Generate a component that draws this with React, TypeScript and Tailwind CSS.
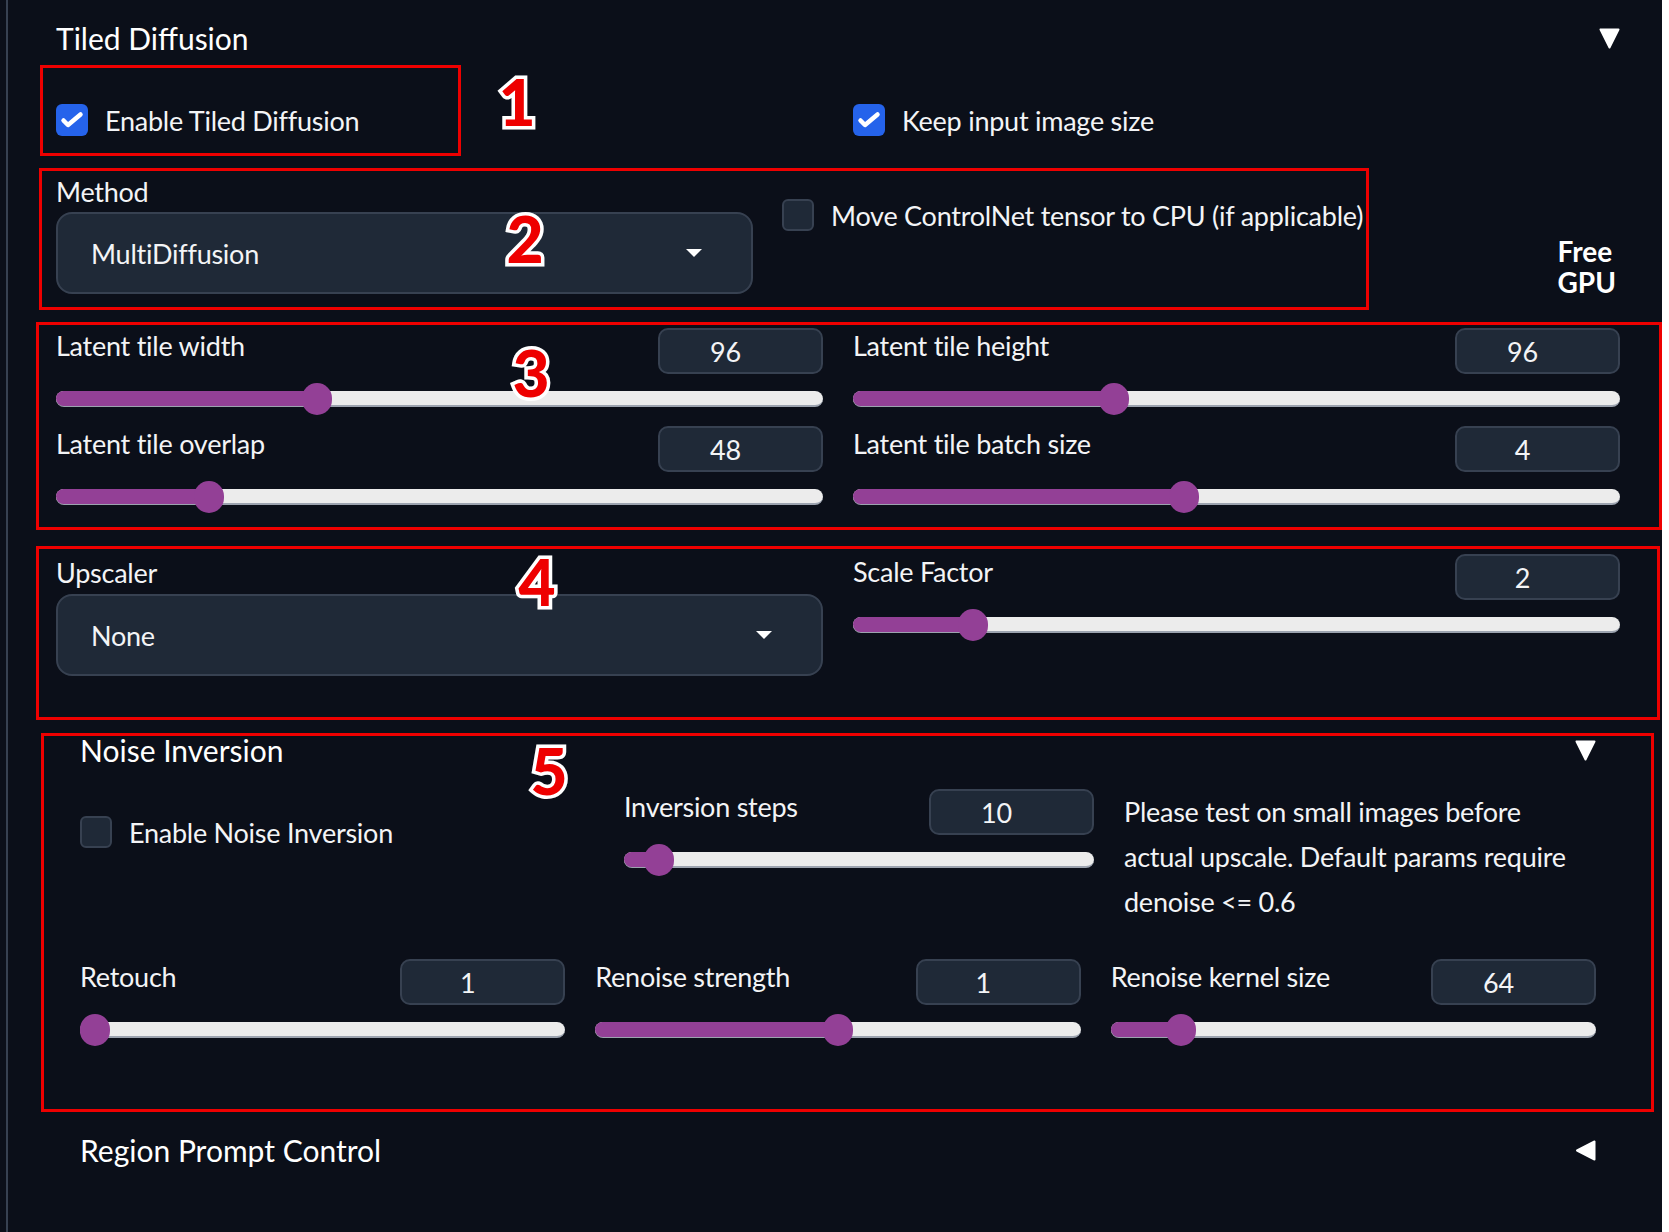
import React from "react";

type SliderProps = { label: string; value: string; frac: number };

function Checkbox({ on }: { on?: boolean }) {
  if (on) {
    return (
      <span className="flex h-[32px] w-[32px] shrink-0 items-center justify-center rounded-[6px] bg-[#2563eb]">
        <svg width="32" height="32" viewBox="0 0 32 32">
          <polyline
            points="7.5,16.5 12,21 24.5,10.5"
            fill="none"
            stroke="white"
            strokeWidth="4.5"
            strokeLinecap="round"
            strokeLinejoin="round"
          />
        </svg>
      </span>
    );
  }
  return <span className="h-[32px] w-[32px] shrink-0 rounded-[6px] border-2 border-[#374151] bg-[#1f2937]" />;
}

function CheckRow({ label, on }: { label: string; on?: boolean }) {
  return (
    <label className="flex items-center gap-[17px] text-[27px] leading-none">
      <Checkbox on={on} />
      <span>{label}</span>
    </label>
  );
}

function TriDown() {
  return (
    <svg width="21" height="21" viewBox="0 0 21 21" className="shrink-0">
      <polygon points="1.5,1.5 19.5,1.5 10.5,19.5" fill="white" stroke="white" strokeWidth="2" strokeLinejoin="round" />
    </svg>
  );
}

function TriLeft() {
  return (
    <svg width="21" height="21" viewBox="0 0 21 21" className="shrink-0">
      <polygon points="19.5,1.5 19.5,19.5 2,10.5" fill="white" stroke="white" strokeWidth="2" strokeLinejoin="round" />
    </svg>
  );
}

function Dropdown({ value, className }: { value: string; className?: string }) {
  return (
    <div
      className={
        "flex h-[82px] items-center justify-between rounded-[16px] border-2 border-[#374151] bg-[#1f2937] pl-[33px] pr-[49px] text-[27px] leading-none " +
        (className ?? "")
      }
    >
      <span>{value}</span>
      <svg width="16" height="8" viewBox="0 0 16 8">
        <polygon points="0,0 16,0 8,8" fill="white" />
      </svg>
    </div>
  );
}

function NumBox({ value }: { value: string }) {
  return (
    <div className="flex h-[46px] w-[165px] shrink-0 items-center justify-center rounded-[10px] border-2 border-[#374151] bg-[#1f2937] pr-[30px] text-[27px] leading-none">
      {value}
    </div>
  );
}

function Track({ frac, className }: { frac: number; className?: string }) {
  return (
    <div className={"relative h-[32px] " + (className ?? "")}>
      <div className="absolute inset-x-0 top-[8px] h-[16px] rounded-full border-b-2 border-[#9ca3af] bg-[#ececec]" />
      <div
        className="absolute left-0 top-[8px] h-[15px] rounded-l-full bg-[#934096]"
        style={{ width: `calc(15px + ${frac} * (100% - 30px))` }}
      />
      <div
        className="absolute top-0 h-[32px] w-[30px] rounded-full bg-[#934096]"
        style={{ left: `calc(${frac} * (100% - 30px))` }}
      />
    </div>
  );
}

function Slider({ label, value, frac }: SliderProps) {
  return (
    <div>
      <div className="flex items-start justify-between">
        <span className="mt-[4px] text-[27px] leading-none">{label}</span>
        <NumBox value={value} />
      </div>
      <Track frac={frac} className="mt-[9px]" />
    </div>
  );
}

function Mark({ n, x, y }: { n: string; x: number; y: number }) {
  const cls = "absolute inset-0 text-center text-[64px] font-black leading-none tracking-normal";
  return (
    <div className="absolute h-[64px] w-[60px]" style={{ left: x - 30, top: y }}>
      <span className={cls + " text-white [-webkit-text-stroke:7px_white]"}>{n}</span>
      <span className={cls + " text-[#ee0000]"}>{n}</span>
    </div>
  );
}

export default function App() {
  return (
    <div className="relative flex h-[1232px] w-[1669px] overflow-hidden bg-[#0b0f19] font-[Lato,sans-serif] tracking-[-0.25px] text-[#f3f4f6]">
      <div className="ml-[6px] w-[2px] shrink-0 bg-[#374151]" />

      <div className="flex-1 pl-[48px] pr-[42px]">
        {/* Tiled Diffusion header */}
        <div className="mt-[23px] flex h-[30px] items-center justify-between">
          <h2 className="text-[30px] leading-none tracking-normal text-white">Tiled Diffusion</h2>
          <TriDown />
        </div>

        <div className="mt-[51px] grid grid-cols-2 gap-x-[30px]">
          <CheckRow on label="Enable Tiled Diffusion" />
          <CheckRow on label="Keep input image size" />
        </div>

        {/* Method row */}
        <div className="mt-[42px] flex h-[116px] items-start">
          <div className="w-[697px] shrink-0">
            <div className="text-[27px] leading-none">Method</div>
            <Dropdown value="MultiDiffusion" className="mt-[7px]" />
          </div>
          <div className="ml-[29px] mt-[21px] flex-1">
            <CheckRow label="Move ControlNet tensor to CPU (if applicable)" />
          </div>
          <button className="mr-[4px] mt-[58px] text-left text-[28px] font-bold leading-[31px] tracking-normal text-white">
            Free
            <br />
            GPU
          </button>
        </div>

        {/* Latent tiles */}
        <div className="mt-[34px] grid grid-cols-2 gap-x-[30px] gap-y-[11px]">
          <Slider label="Latent tile width" value="96" frac={0.3333} />
          <Slider label="Latent tile height" value="96" frac={0.3333} />
          <Slider label="Latent tile overlap" value="48" frac={0.1875} />
          <Slider label="Latent tile batch size" value="4" frac={0.4286} />
        </div>

        {/* Upscaler */}
        <div className="mt-[41px] grid grid-cols-2 gap-x-[30px]">
          <div>
            <div className="mt-[5px] text-[27px] leading-none">Upscaler</div>
            <Dropdown value="None" className="mt-[8px]" />
          </div>
          <Slider label="Scale Factor" value="2" frac={0.1429} />
        </div>

        {/* Nested accordions */}
        <div className="px-[24px]">
          <div className="mt-[59px] flex h-[30px] items-center justify-between">
            <h3 className="text-[30px] leading-none tracking-normal text-white">Noise Inversion</h3>
            <TriDown />
          </div>

          <div className="mt-[24px] flex items-start">
            <div className="mt-[27px] w-[514px] shrink-0">
              <CheckRow label="Enable Noise Inversion" />
            </div>
            <div className="ml-[30px] w-[470px] shrink-0">
              <Slider label="Inversion steps" value="10" frac={0.045} />
            </div>
            <p className="ml-[30px] flex-1 text-[27px] leading-[45px]">
              Please test on small images before
              <br />
              actual upscale. Default params require
              <br />
              denoise &lt;= 0.6
            </p>
          </div>

          <div className="mt-[35px] grid grid-cols-3 gap-x-[30px]">
            <Slider label="Retouch" value="1" frac={0} />
            <Slider label="Renoise strength" value="1" frac={0.5} />
            <Slider label="Renoise kernel size" value="64" frac={0.1216} />
          </div>

          <div className="mt-[89px] flex h-[30px] items-center justify-between">
            <h3 className="text-[30px] leading-none tracking-normal text-white">Region Prompt Control</h3>
            <TriLeft />
          </div>
        </div>
      </div>

      <div className="w-[7px] shrink-0 bg-white" />

      {/* annotation overlays */}
      <div className="pointer-events-none absolute left-[40px] top-[65px] h-[91px] w-[421px] border-[3px] border-[#ee0000]" />
      <div className="pointer-events-none absolute left-[39px] top-[168px] h-[142px] w-[1330px] border-[3px] border-[#ee0000]" />
      <div className="pointer-events-none absolute left-[36px] top-[322px] h-[208px] w-[1626px] border-[3px] border-[#ee0000]" />
      <div className="pointer-events-none absolute left-[36px] top-[546px] h-[174px] w-[1624px] border-[3px] border-[#ee0000]" />
      <div className="pointer-events-none absolute left-[41px] top-[733px] h-[379px] w-[1613px] border-[3px] border-[#ee0000]" />

      <Mark n="1" x={517} y={70} />
      <Mark n="2" x={525} y={207} />
      <Mark n="3" x={531} y={341} />
      <Mark n="4" x={537} y={550} />
      <Mark n="5" x={549} y={739} />
    </div>
  );
}
